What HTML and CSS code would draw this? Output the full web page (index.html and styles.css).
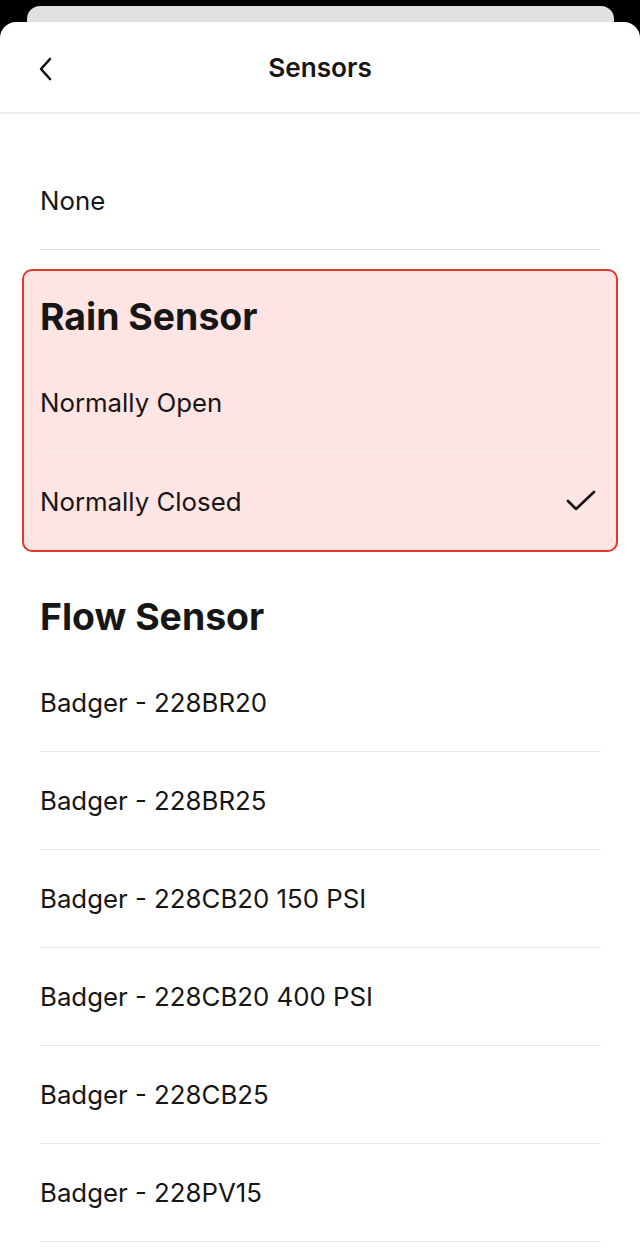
FILE: index.html
```html
<!DOCTYPE html>
<html>
<head>
<meta charset="utf-8">
<link rel="stylesheet" href="styles.css">
</head>
<body>
<div class="backdrop">
  <div class="back-card"></div>
  <div class="sheet">
    <header class="header">
      <button class="back" aria-label="Back">
        <svg width="16" height="24" viewBox="0 0 16 24"><path d="M12 2 L3 12 L12 22" fill="none" stroke="#111" stroke-width="2.6" stroke-linecap="round" stroke-linejoin="round"/></svg>
      </button>
      <h1 class="title">Sensors</h1>
    </header>
    <div class="content">
      <div class="list">
        <div class="row">None</div>
      </div>
      <section class="group selected">
        <h2 class="heading">Rain Sensor</h2>
        <div class="row">Normally Open</div>
        <div class="row last">Normally Closed
          <svg class="check" width="32" height="24" viewBox="0 0 32 24"><path d="M3 12 L11 20 L29 3" fill="none" stroke="#111" stroke-width="2.6" stroke-linecap="round" stroke-linejoin="round"/></svg>
        </div>
      </section>
      <section class="group">
        <h2 class="heading">Flow Sensor</h2>
        <div class="row">Badger - 228BR20</div>
        <div class="row">Badger - 228BR25</div>
        <div class="row">Badger - 228CB20 150 PSI</div>
        <div class="row">Badger - 228CB20 400 PSI</div>
        <div class="row">Badger - 228CB25</div>
        <div class="row">Badger - 228PV15</div>
      </section>
    </div>
  </div>
</div>
</body>
</html>
```
FILE: styles.css
```css
* { box-sizing: border-box; }
html, body {
  margin: 0;
  padding: 0;
  background: #000;
  height: 1254px;
  overflow: hidden;
}
body {
  font-family: Inter, "Noto Sans", sans-serif;
  color: #161616;
}
.backdrop {
  padding-top: 6px;
  display: flex;
  flex-direction: column;
  align-items: center;
}
.back-card {
  width: 587px;
  height: 40px;
  background: #e1e1e1;
  border-radius: 13px 13px 0 0;
  margin-bottom: -24px;
}
.sheet {
  position: relative;
  width: 640px;
  background: #fff;
  border-radius: 16px 16px 0 0;
  height: 1232px;
}
.header {
  height: 92px;
  display: flex;
  align-items: center;
  justify-content: center;
  border-bottom: 2px solid #ececec;
  position: relative;
}
.back {
  position: absolute;
  left: 36px;
  top: 34px;
  border: 0;
  background: none;
  padding: 0;
  width: 20px;
  height: 26px;
  display: flex;
  align-items: center;
  justify-content: center;
}
.title {
  margin: 0;
  font-size: 26.2px;
  font-weight: 600;
}
.content {
  padding-top: 38px;
}
.list {
  padding: 0 39px 0 40px;
}
.row {
  height: 98px;
  display: flex;
  align-items: center;
  justify-content: space-between;
  font-size: 25.8px;
  border-bottom: 1px solid #e3e3e3;
}
.group {
  margin: 19px 22px 0;
  padding: 0 17px 0 18px;
}
.group.selected {
  background: #ffe4e4;
  border: 2px solid #e2382e;
  border-radius: 10px;
  padding: 0 15px 0 16px;
}
.group .row { border-color: #e6e6e6; }
.row.last { border-bottom: 0; }
.heading {
  margin: 0;
  height: 83px;
  padding-top: 26px;
  font-size: 37.4px;
  line-height: 40px;
  font-weight: 700;
}
.check { margin-right: 4px; }
```
